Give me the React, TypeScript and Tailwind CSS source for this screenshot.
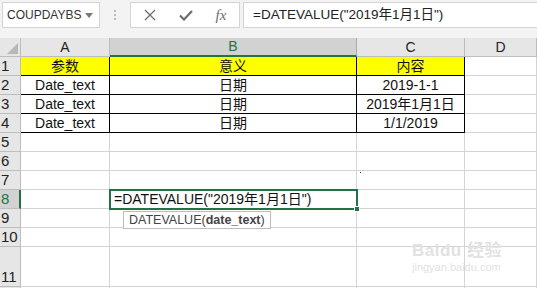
import React from 'react';

const cjk = { fontFamily: '"Liberation Sans", "Noto Sans CJK SC", sans-serif' };

const colW = [21, 89, 247, 108, 72];
const rowH = [19, 19, 19, 19, 19, 19, 19, 19, 19, 19, 40, 19];

type Cell = { text?: string; bg?: string; boxed?: boolean };

const data: Record<string, Cell> = {
  '1-1': { text: '参数', bg: 'bg-[#ffff00]', boxed: true },
  '1-2': { text: '意义', bg: 'bg-[#ffff00]', boxed: true },
  '1-3': { text: '内容', bg: 'bg-[#ffff00]', boxed: true },
  '2-1': { text: 'Date_text', boxed: true },
  '2-2': { text: '日期', boxed: true },
  '2-3': { text: '2019-1-1', boxed: true },
  '3-1': { text: 'Date_text', boxed: true },
  '3-2': { text: '日期', boxed: true },
  '3-3': { text: '2019年1月1日', boxed: true },
  '4-1': { text: 'Date_text', boxed: true },
  '4-2': { text: '日期', boxed: true },
  '4-3': { text: '1/1/2019', boxed: true },
};

const FormulaBar = () => (
  <div className="h-[38px] bg-[#f3f3f3] relative">
    <div className="flex items-start pt-[2px]">
      <div className="ml-[2px] w-[98px] h-[26px] bg-white border border-[#d4d4d4] flex items-center justify-between pl-[4px] pr-[6px]">
        <span className="text-[12px] text-[#333]" style={cjk}>COUPDAYBS</span>
        <span className="w-0 h-0 border-l-[4px] border-r-[4px] border-t-[5px] border-l-transparent border-r-transparent border-t-[#7a7a7a] mt-[1px]" />
      </div>
      <div className="w-[30px] h-[26px] flex items-center justify-center">
        <div className="flex flex-col gap-[2px]">
          <span className="w-[2px] h-[2px] bg-[#bbb]" />
          <span className="w-[2px] h-[2px] bg-[#bbb]" />
          <span className="w-[2px] h-[2px] bg-[#bbb]" />
        </div>
      </div>
      <div className="w-[110px] h-[26px] bg-white border border-[#d4d4d4] flex items-center">
        <div className="w-[38px] flex justify-center">
          <svg width="12" height="12" viewBox="0 0 12 12">
            <path d="M1 1 L11 11 M11 1 L1 11" stroke="#6d6d6d" strokeWidth="1.3" fill="none" />
          </svg>
        </div>
        <div className="w-[34px] flex justify-center">
          <svg width="14" height="12" viewBox="0 0 14 12">
            <path d="M1 6.5 L5 10.5 L13 2" stroke="#6d6d6d" strokeWidth="2.2" fill="none" />
          </svg>
        </div>
        <div className="w-[36px] flex justify-center">
          <span className="italic text-[15px] text-[#6d6d6d]" style={{ fontFamily: '"Liberation Serif", serif' }}>fx</span>
        </div>
      </div>
      <div className="ml-[3px] flex-1 h-[26px] bg-white border border-[#d4d4d4] border-r-0 flex items-center pl-[9px]">
        <span className="text-[13.5px] text-[#222]" style={cjk}>=DATEVALUE("2019年1月1日")</span>
      </div>
    </div>
  </div>
);

const HeaderRow = () => (
  <div className="flex h-[19px]">
    <div className="w-[21px] bg-[#e6e6e6] border-r border-b border-[#bdbdbd] relative">
      <svg className="absolute right-[2px] bottom-[2px]" width="11" height="11" viewBox="0 0 11 11">
        <path d="M11 0 L11 11 L0 11 Z" fill="#b8b8b8" />
      </svg>
    </div>
    {['A', 'B', 'C', 'D'].map((l, i) => {
      const active = l === 'B';
      return (
        <div
          key={l}
          className={
            active
              ? 'bg-[#d2d2d2] border-r border-[#ababab] border-b-2 border-b-[#217346] flex items-center justify-center text-[14px] text-[#217346]'
              : 'bg-[#e6e6e6] border-r border-b border-[#bdbdbd] flex items-center justify-center text-[14px] text-[#222]'
          }
          style={{ width: colW[i + 1], ...cjk }}
        >
          {l}
        </div>
      );
    })}
    <div className="flex-1 bg-[#e6e6e6] border-b border-[#bdbdbd]" />
  </div>
);

export default function App() {
  return (
    <div className="w-[537px] h-[288px] overflow-hidden bg-white relative select-none">
      <FormulaBar />
      <HeaderRow />
      <div className="flex flex-col">
        {rowH.map((h, r) => {
          const row = r + 1;
          const activeRow = row === 8;
          return (
            <div key={row} className="flex" style={{ height: h }}>
              <div
                className={
                  activeRow
                    ? 'w-[21px] bg-[#d2d2d2] border-r-2 border-r-[#217346] border-b border-[#bdbdbd] flex items-end justify-start pl-[1px] text-[15px] leading-[18px] text-[#217346]'
                    : 'w-[21px] bg-[#e6e6e6] border-r border-b border-[#bdbdbd] flex items-end justify-start pl-[1px] text-[15px] leading-[18px] text-[#222]'
                }
                style={cjk}
              >
                {row <= 11 ? row : ''}
              </div>
              {[1, 2, 3, 4].map((c) => {
                const cell = data[`${row}-${c}`];
                const boxed = cell?.boxed;
                return (
                  <div
                    key={c}
                    className={
                      (boxed
                        ? 'border-r border-b border-black '
                        : 'border-r border-b border-[#d4d4d4] ') +
                      (cell?.bg ?? 'bg-white') +
                      ' flex items-center justify-center text-[14px] text-[#111] whitespace-nowrap'
                    }
                    style={{ width: colW[c], ...cjk }}
                  >
                    {cell?.text}
                  </div>
                );
              })}
              <div className="flex-1 border-b border-[#d4d4d4]" />
            </div>
          );
        })}
      </div>

      {/* active cell B8 */}
      <div className="absolute left-[109px] top-[189px] w-[249px] h-[21px] border-2 border-[#217346] flex items-center pl-[3px]">
        <span className="text-[14px] text-[#111] whitespace-nowrap" style={cjk}>=DATEVALUE("2019年1月1日")</span>
      </div>
      <div className="absolute left-[354px] top-[206px] w-[6px] h-[6px] bg-[#217346] border border-white" />
      <div className="absolute left-[360px] top-[172px] w-[1px] h-[1px] bg-[#333]" />

      {/* function tooltip */}
      <div className="absolute left-[123px] top-[211px] h-[18px] px-[5px] bg-white border border-[#bcbcbc] flex items-center">
        <span className="text-[12.5px] text-[#444] whitespace-nowrap" style={cjk}>
          DATEVALUE(<b>date_text</b>)
        </span>
      </div>

      {/* watermark */}
      <div className="absolute left-[412px] top-[241px] flex flex-col items-start text-[#e2e2e2]">
        <span className="text-[17px] font-bold leading-[20px] tracking-[0.5px]" style={cjk}>Baidu 经验</span>
        <span className="text-[11px] leading-[13px]" style={cjk}>jingyan.baidu.com</span>
      </div>
    </div>
  );
}
